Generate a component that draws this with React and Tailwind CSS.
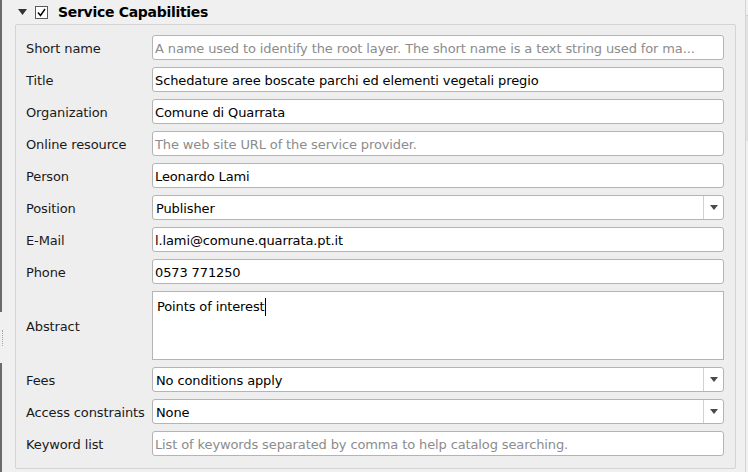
const rows = [
  { label: "Short name", placeholder: "A name used to identify the root layer. The short name is a text string used for ma..." },
  { label: "Title", value: "Schedature aree boscate parchi ed elementi vegetali pregio" },
  { label: "Organization", value: "Comune di Quarrata" },
  { label: "Online resource", placeholder: "The web site URL of the service provider." },
  { label: "Person", value: "Leonardo Lami" },
  { label: "Position", value: "Publisher", combo: true },
  { label: "E-Mail", value: "l.lami@comune.quarrata.pt.it" },
  { label: "Phone", value: "0573 771250" },
  { label: "Abstract", value: "Points of interest", area: true },
  { label: "Fees", value: "No conditions apply", combo: true },
  { label: "Access constraints", value: "None", combo: true },
  { label: "Keyword list", placeholder: "List of keywords separated by comma to help catalog searching." },
];

const Arrow = () => (
  <svg width="8" height="5" viewBox="0 0 8 5">
    <path d="M0 0h8L4 5z" fill="#4a4a4a" />
  </svg>
);

const Field = ({ row }) => {
  if (row.area) {
    return (
      <div className="h-[69px] bg-white border border-[#b4b4b4] px-[4px] pt-[5px] flex items-start">
        <span className="text-black leading-[20px]">{row.value}</span>
        <span className="w-px h-[18px] bg-black mt-[1px]" />
      </div>
    );
  }
  if (row.combo) {
    return (
      <div className="h-[25px] bg-white border border-[#b4b4b4] rounded-[3px] flex items-center">
        <span className="flex-1 px-[3px] pt-[2px] text-black truncate">{row.value}</span>
        <div className="w-[20px] h-full border-l border-[#d0d0d0] flex items-center justify-center">
          <Arrow />
        </div>
      </div>
    );
  }
  return (
    <div className="h-[25px] bg-white border border-[#b4b4b4] rounded-[3px] flex items-center px-[2px] pt-[2px]">
      {row.value ? (
        <span className="text-black truncate">{row.value}</span>
      ) : (
        <span className="text-[#8c8c8c] truncate">{row.placeholder}</span>
      )}
    </div>
  );
};

export default function App() {
  return (
    <div
      className="w-[748px] h-[472px] bg-[#f0f0f0] flex overflow-hidden text-[13px] tracking-[-0.12px] text-[#1a1a1a]"
      style={{ fontFamily: '"DejaVu Sans", Tahoma, sans-serif' }}
    >
      {/* left splitter edge */}
      <div className="w-[3px] flex flex-col">
        <div className="h-[312px] w-[2px] bg-[#6b6b6b]" />
        <div className="h-[51px] flex items-center">
          <div className="ml-[2px] w-px h-[16px] border-l border-dotted border-[#a0a0a0]" />
        </div>
        <div className="flex-1 w-[2px] bg-[#6b6b6b]" />
      </div>

      <div className="flex-1 flex flex-col pl-[12px] pr-[9px]">
        <div className="h-[24px] flex items-center">
          <div className="ml-[3px] mr-[8px]">
            <svg width="9" height="6" viewBox="0 0 9 6">
              <path d="M0 0h9L4.5 6z" fill="#333" />
            </svg>
          </div>
          <div className="w-[13px] h-[13px] bg-white border border-[#5a5a5a] flex items-center justify-center">
            <svg width="9" height="9" viewBox="0 0 9 9">
              <path d="M1 4.5l2.5 3L8 1" stroke="#000" strokeWidth="1.4" fill="none" />
            </svg>
          </div>
          <span className="ml-[10px] font-bold text-[14px] tracking-[-0.3px] text-black">Service Capabilities</span>
        </div>

        <div className="h-[445px] border border-[#d4d4d4] rounded-[2px] bg-[#eeeeee] pl-[10px] pr-[11px] pt-[10px] flex flex-col gap-[7px]">
          {rows.map((row) => (
            <div key={row.label} className="flex items-center">
              <div className="w-[126px] shrink-0 whitespace-nowrap pt-[2px]">{row.label}</div>
              <div className="flex-1 min-w-0">
                <Field row={row} />
              </div>
            </div>
          ))}
        </div>
      </div>

      {/* right scrollbar edge */}
      <div className="w-[3px] border-l border-[#d4d4d4] flex flex-col">
        <div className="h-[15px]" />
        <div className="h-[126px] bg-[#e2e2e2] border-t border-[#d0d0d0]" />
      </div>
    </div>
  );
}
